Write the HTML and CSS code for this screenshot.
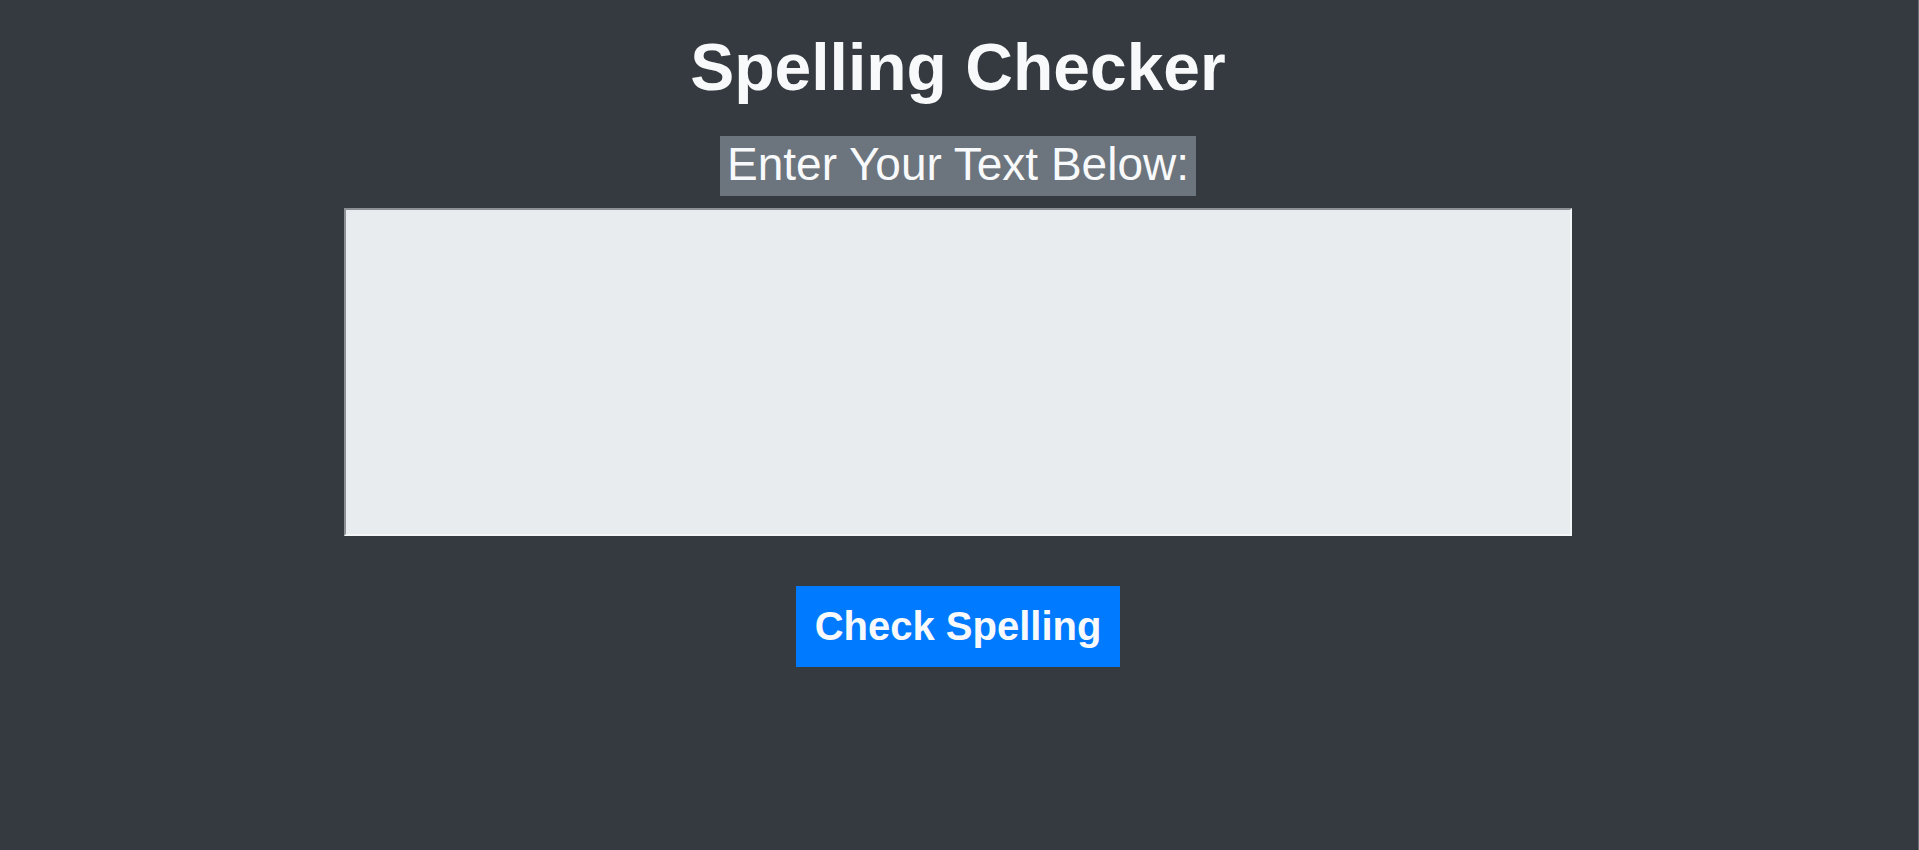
FILE: index.html
```html
<!DOCTYPE html>
<html lang="en">
<head>
<meta charset="utf-8">
<title>Spelling Checker</title>
<link rel="stylesheet" href="styles.css">
</head>
<body>
  <main class="app">
    <h1 class="title">Spelling Checker</h1>
    <label class="prompt" for="text">Enter Your Text Below:</label>
    <textarea id="text" class="editor"></textarea>
    <button class="check-btn" type="button">Check Spelling</button>
  </main>
</body>
</html>
```
FILE: styles.css
```css
html, body {
  margin: 0;
  padding: 0;
  background: #343a40;
}

body {
  min-height: 850px;
  box-sizing: border-box;
  border-right: 1px solid #6b7078;
  padding-right: 2px;
  font-family: "Liberation Sans", Arial, sans-serif;
  color: #f8f9fa;
}

.app {
  display: flex;
  flex-direction: column;
  align-items: center;
  padding-top: 30px;
}

.title {
  margin: 0;
  font-size: 66px;
  line-height: 75px;
  font-weight: 700;
  color: #f8f9fa;
}

.prompt {
  margin-top: 31px;
  padding: 2px 7px 6px;
  font-size: 46px;
  line-height: 52px;
  background: #6c757d;
  color: #f8f9fa;
}

.editor {
  display: block;
  margin-top: 12px;
  width: 1228px;
  height: 328px;
  box-sizing: border-box;
  background: #e9ecef;
  border-style: solid;
  border-width: 2px;
  border-color: #8d9195 #f4f5f7 #f4f5f7 #8d9195;
  resize: none;
  outline: none;
  padding: 4px;
  font-family: "Liberation Sans", Arial, sans-serif;
  font-size: 20px;
}

.check-btn {
  margin-top: 50px;
  padding: 17px 19px;
  border: none;
  background: #007bff;
  color: #f8f9fa;
  font-family: "Liberation Sans", Arial, sans-serif;
  font-size: 40px;
  line-height: 47px;
  font-weight: 700;
  cursor: pointer;
}
```
